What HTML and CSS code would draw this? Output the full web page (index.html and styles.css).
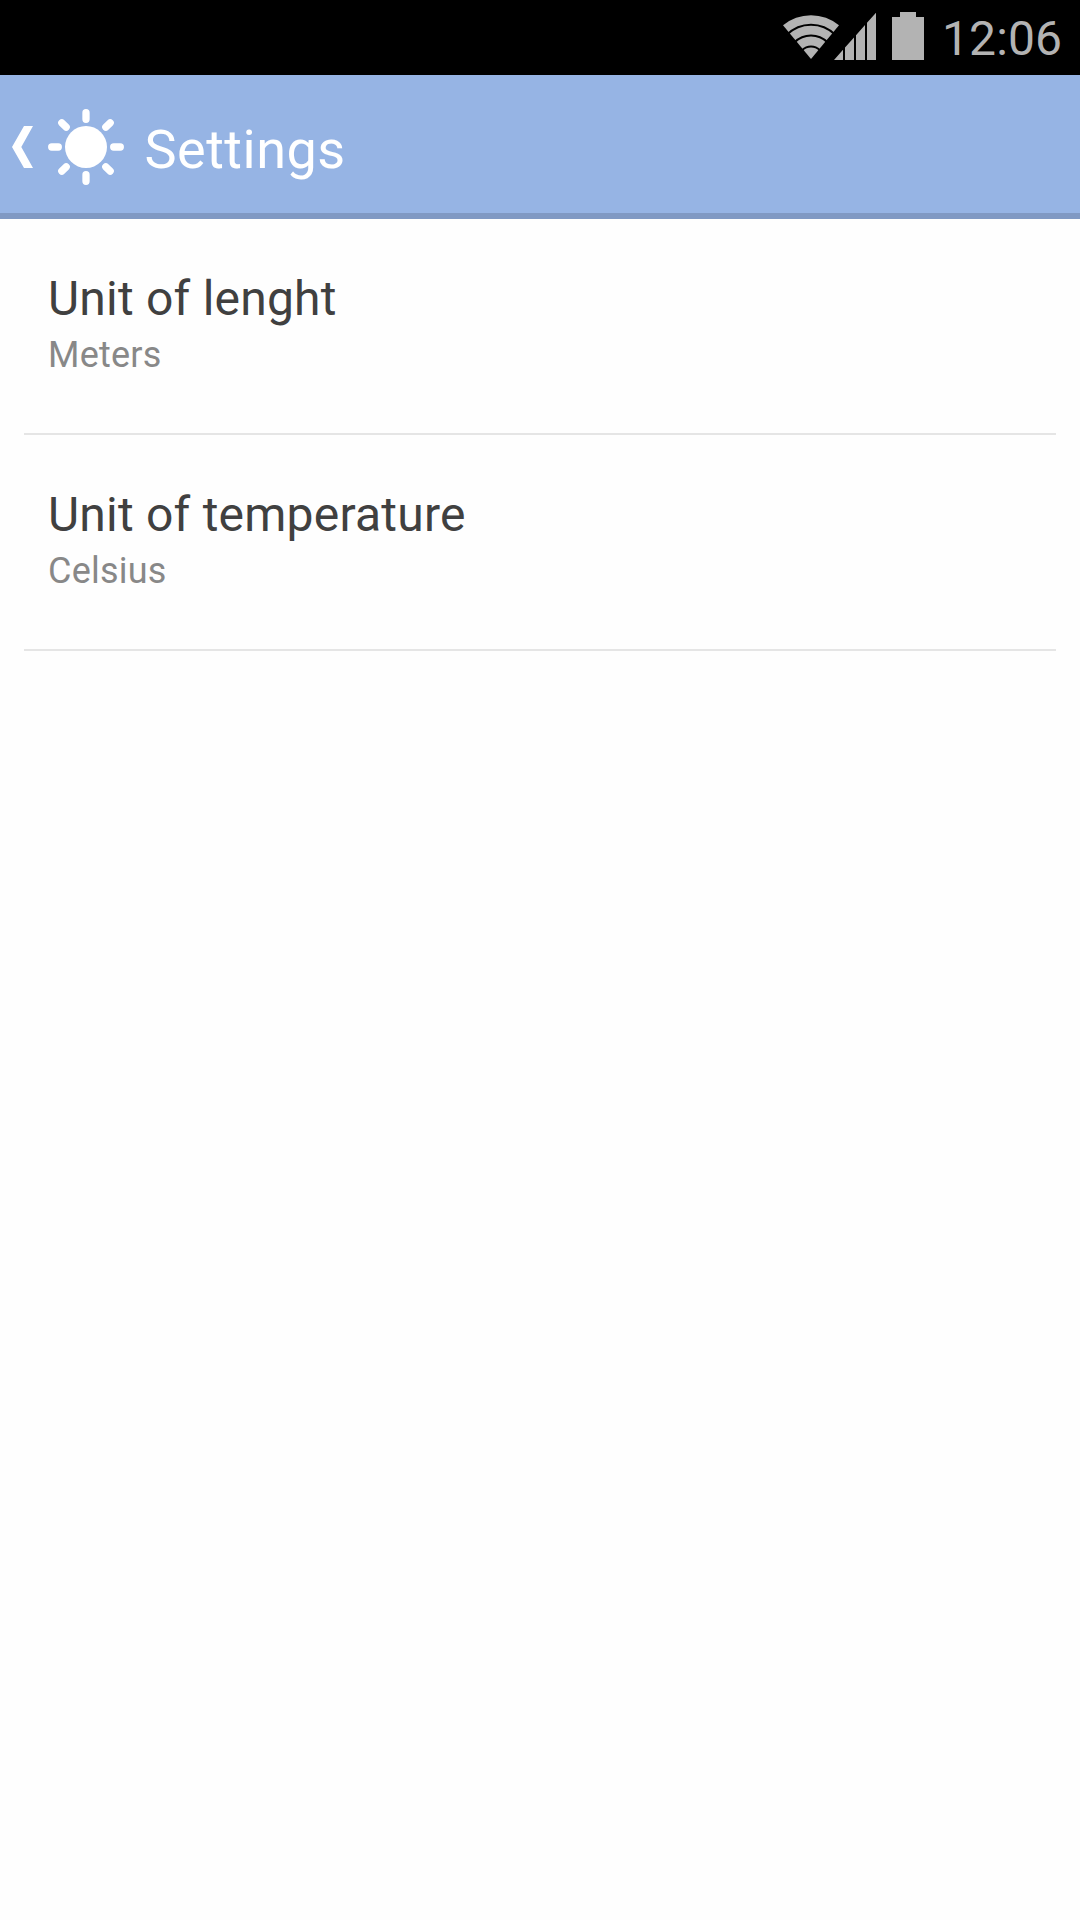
FILE: index.html
```html
<!DOCTYPE html>
<html lang="en">
<head>
<meta charset="utf-8">
<title>Settings</title>
<link rel="stylesheet" href="styles.css">
</head>
<body>
<div class="status-bar">
  <svg class="status-icons" width="141" height="75" viewBox="783 0 141 75" aria-hidden="true">
    <path d="M811 59 L783 25.3 A43.7 43.7 0 0 1 839 25.3 Z"/>
    <g class="wifi-gaps">
      <circle cx="811" cy="58.7" r="34"/>
      <circle cx="811" cy="58.7" r="23.3"/>
      <circle cx="811" cy="58.7" r="12.3"/>
    </g>
    <path d="M834 60 L843 49.7 V60 Z M845 47.5 L854 37.4 V60 H845 Z M856 35.2 L865 25.1 V60 H856 Z M867 22.8 L876 12.7 V60 H867 Z"/>
    <path d="M892 17 H900 V12 H916 V17 H924 V60 H892 Z"/>
  </svg>
  <span class="clock">12:06</span>
</div>
<header class="action-bar">
  <svg class="back-icon" width="21" height="42" viewBox="0 0 21 42" aria-hidden="true">
    <path d="M12 0 H21 L9.3 21 L21 42 H12 L0 21 Z"/>
  </svg>
  <svg class="sun-icon" width="76" height="76" viewBox="-38 -38 76 76" aria-hidden="true">
    <circle r="21"/>
    <path class="rays" d="M0 -34.3 V-27.7 M0 34.3 V27.7 M-34.3 0 H-27.7 M34.3 0 H27.7 M-24.2 -24.2 L-19.8 -19.8 M24.2 -24.2 L19.8 -19.8 M-24.2 24.2 L-19.8 19.8 M24.2 24.2 L19.8 19.8"/>
  </svg>
  <h1 class="title">Settings</h1>
</header>
<main class="settings-list">
  <section class="setting">
    <h2 class="setting-name">Unit of lenght</h2>
    <p class="setting-value">Meters</p>
  </section>
  <section class="setting">
    <h2 class="setting-name">Unit of temperature</h2>
    <p class="setting-value">Celsius</p>
  </section>
</main>
</body>
</html>
```
FILE: styles.css
```css
* { box-sizing: border-box; margin: 0; padding: 0; }
body {
  min-height: 1920px;
  background: #fefefe;
  font-family: Roboto, sans-serif;
  font-weight: 400;
}
svg { display: block; flex: none; }
h1, h2 { font-weight: 400; }
.status-bar {
  display: flex;
  justify-content: flex-end;
  height: 75px;
  padding-right: 17px;
  background: #000;
}
.status-icons { fill: #b3b3b3; margin-right: 18px; }
.wifi-gaps { fill: none; stroke: #000; stroke-width: 2; }
.clock {
  width: 121px;
  font-size: 48px;
  line-height: 77px;
  letter-spacing: 0.1px;
  color: #b3b3b3;
  white-space: nowrap;
}
.action-bar {
  display: flex;
  align-items: center;
  height: 144px;
  padding-left: 12px;
  background: #96b4e4;
  border-bottom: 6px solid #8099c3;
  color: #fff;
}
.back-icon { fill: #fff; margin: 6px 15px 0 0; }
.sun-icon { fill: #fff; margin: 6px 20.5px 0 0; }
.rays { stroke: #fff; stroke-width: 7.3; stroke-linecap: round; }
.title {
  padding-top: 11px;
  font-size: 54px;
  line-height: 64px;
  letter-spacing: 0.5px;
}
.settings-list { padding: 0 24px; }
.setting {
  height: 216px;
  padding: 52px 24px 0;
  border-bottom: 2px solid #e5e5e5;
}
.setting-name {
  font-size: 48px;
  line-height: 55px;
  letter-spacing: 0.22px;
  color: #404040;
}
.setting-value {
  margin-top: 8px;
  font-size: 36px;
  line-height: 42px;
  letter-spacing: 0.22px;
  color: #888;
}
```
